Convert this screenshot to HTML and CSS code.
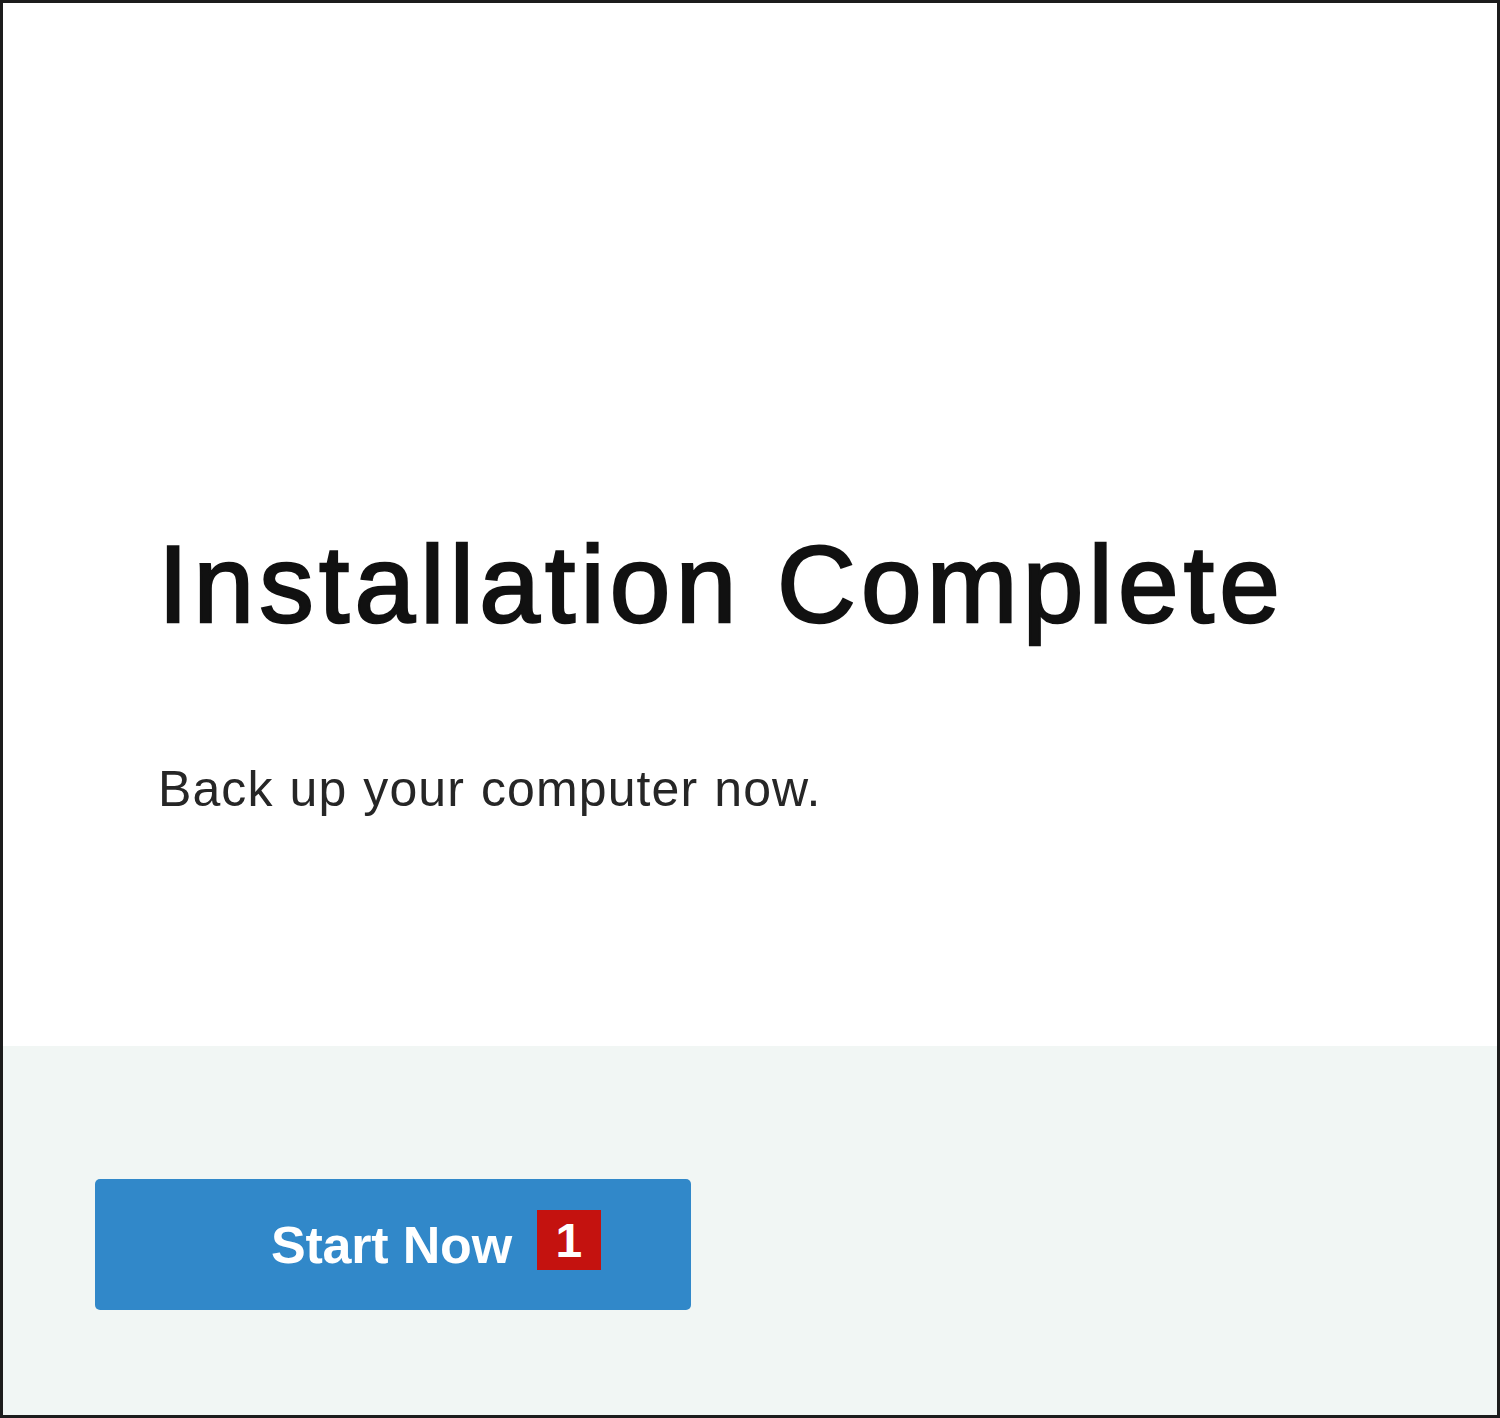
FILE: index.html
```html
<!DOCTYPE html>
<html>
<head>
<meta charset="utf-8">
<link rel="stylesheet" href="styles.css">
</head>
<body>
<div class="frame">
  <section class="main">
    <h1 class="title">Installation Complete</h1>
    <p class="subtitle">Back up your computer now.</p>
  </section>
  <footer class="footer">
    <button class="start-btn"><span class="start-label">Start Now</span><span class="badge">1</span></button>
  </footer>
</div>
</body>
</html>
```
FILE: styles.css
```css
html, body {
  margin: 0;
  padding: 0;
  background: #ffffff;
}
.frame {
  width: 1500px;
  height: 1418px;
  box-sizing: border-box;
  border: 3px solid #1c1c1c;
  display: flex;
  flex-direction: column;
  font-family: "Liberation Sans", Arial, sans-serif;
}
.main {
  height: 1043px;
  box-sizing: border-box;
  padding: 0 0 0 155px;
  background: #ffffff;
  display: flex;
  flex-direction: column;
}
.title {
  margin: 516px 0 0 0;
  font-size: 109px;
  line-height: 130px;
  font-weight: 400;
  letter-spacing: 5.2px;
  color: #111111;
  -webkit-text-stroke: 2.4px #111111;
}
.subtitle {
  margin: 110px 0 0 0;
  font-size: 50px;
  line-height: 60px;
  letter-spacing: 1.1px;
  word-spacing: 1px;
  color: #262626;
}
.footer {
  flex: 1;
  background: #f1f6f4;
  padding: 133px 0 0 92px;
}
.start-btn {
  width: 596px;
  height: 131px;
  box-sizing: border-box;
  border: none;
  border-radius: 5px;
  background: #3188c9;
  display: flex;
  align-items: center;
  padding: 0 0 0 176px;
  font-family: "Liberation Sans", Arial, sans-serif;
  cursor: pointer;
}
.start-label {
  color: #ffffff;
  font-weight: bold;
  font-size: 52px;
  letter-spacing: -0.2px;
}
.badge {
  margin: 0 0 9px 25px;
  width: 64px;
  height: 60px;
  background: #c4120f;
  color: #ffffff;
  font-weight: bold;
  font-size: 48px;
  display: flex;
  align-items: center;
  justify-content: center;
}
```
